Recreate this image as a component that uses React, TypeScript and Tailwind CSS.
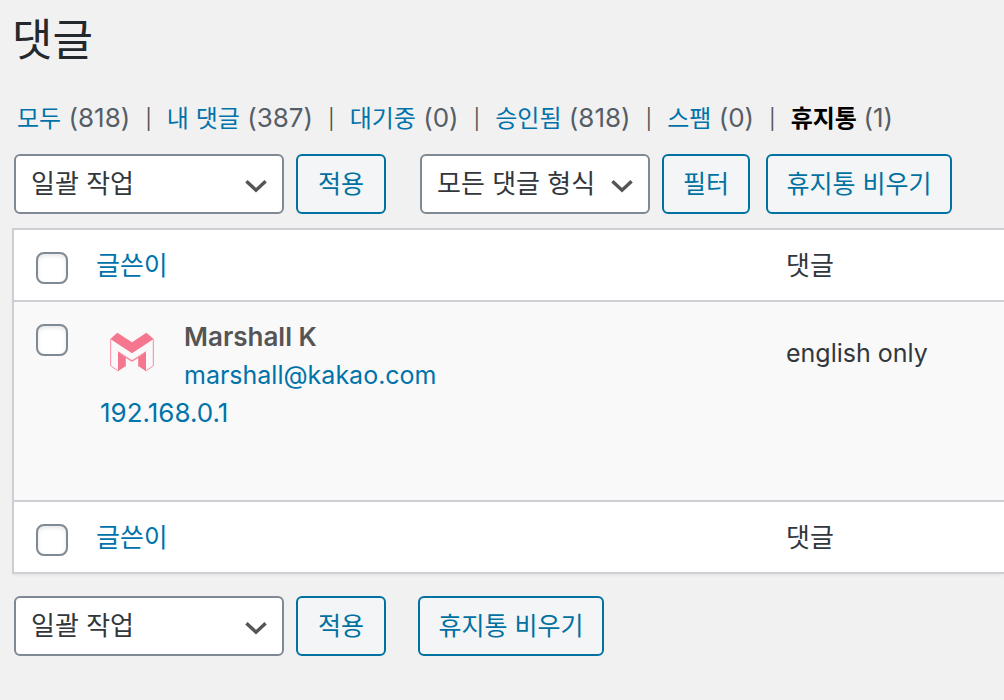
import React from "react";

const filters = [
  { label: "모두", count: 818 },
  { label: "내 댓글", count: 387 },
  { label: "대기중", count: 0 },
  { label: "승인됨", count: 818 },
  { label: "스팸", count: 0 },
  { label: "휴지통", count: 1, current: true },
];

function Select({ label, option, className }: { label: string; option: string; className: string }) {
  return (
    <div className={`relative h-[60px] shrink-0 ${className}`}>
      <select
        aria-label={label}
        className="block h-full w-full appearance-none rounded-md border-2 border-[#7e8993] bg-white pl-[15px] pr-12 text-[26px] leading-8 text-[#32373c]"
      >
        <option>{option}</option>
      </select>
      <svg
        className="pointer-events-none absolute right-4 top-[25px] h-3.5 w-6"
        viewBox="0 0 24 14"
        fill="none"
        stroke="#555"
        strokeWidth="3.4"
        aria-hidden="true"
      >
        <path d="M2.4 2.2 12 11.2 21.6 2.2" />
      </svg>
    </div>
  );
}

function Button({ children, className }: { children: React.ReactNode; className: string }) {
  return (
    <button
      type="button"
      className={`h-[60px] shrink-0 whitespace-nowrap rounded-md border-2 border-[#0071a1] bg-[#f3f5f6] pt-0.5 text-center text-[25px] text-[#0071a1] ${className}`}
    >
      {children}
    </button>
  );
}

function Checkbox({ label }: { label: string }) {
  return (
    <input
      type="checkbox"
      aria-label={label}
      className="block h-8 w-8 appearance-none rounded-lg border-2 border-[#7e8993] bg-white shadow-[inset_0_2px_4px_rgba(0,0,0,0.1)] checked:bg-[#0071a1]"
    />
  );
}

function HeadingCells() {
  return (
    <>
      <td className="pl-[22px] pt-1.5">
        <Checkbox label="모두 선택" />
      </td>
      <th scope="col" className="pl-[7px] text-left font-normal">
        <a href="#author" className="text-[#0073aa]">글쓴이</a>
      </th>
      <th scope="col" className="text-left font-normal text-[#32373c]">댓글</th>
    </>
  );
}

function Logo() {
  return (
    <svg className="h-10 w-11" viewBox="0 0 132 120" role="img" aria-label="Marshall K">
      <path
        d="M2 22 V101 L24 117 M130 22 V101 L108 117 M24 59 L66 86 L108 59 M46 76 L66 88 L86 76 M46 104 V76 M86 104 V76"
        fill="none"
        stroke="#f5768f"
        strokeWidth="2.5"
      />
      <path
        d="M22 2 66 31 109 2 131 21 66 64 1 21Z M24 59 46 75V103L24 118Z M108 59 86 75V103L108 118Z"
        fill="#f5768f"
      />
    </svg>
  );
}

export default function App() {
  return (
    <main className="min-h-screen overflow-x-hidden bg-[#f1f1f1] pb-11 pl-3 font-['Inter','Noto_Sans_CJK_KR',sans-serif] text-[26px] text-[#444]">
      <h1 className="h-[78px] pt-2.5 text-[44px] leading-[60px] text-[#23282d]">댓글</h1>

      <ul className="flex h-[76px] items-center whitespace-nowrap pl-[5px] pt-1 text-[26px] leading-9">
        {filters.map((f, i) => (
          <li key={f.label} className="flex items-center">
            <a
              href="#filter"
              className={f.current ? "font-semibold text-black" : "text-[#0073aa]"}
            >
              <span className="text-2xl">{f.label}</span>{" "}
              <span className="font-normal text-[#555d66]">({f.count})</span>
            </a>
            {i < filters.length - 1 && <span className="px-[15px] pt-0.5 text-xl text-[#555]">|</span>}
          </li>
        ))}
      </ul>

      <div className="flex pl-0.5">
        <Select label="일괄 작업 선택" option="일괄 작업" className="w-[270px]" />
        <Button className="ml-3 w-[90px]">적용</Button>
        <Select label="댓글 형식 필터" option="모든 댓글 형식" className="ml-[34px] w-[230px]" />
        <Button className="ml-3 w-[88px]">필터</Button>
        <Button className="ml-4 w-[186px]">휴지통 비우기</Button>
      </div>

      <table className="mt-3.5 w-full table-fixed border-collapse border-y-2 border-l-2 border-[#ccd0d4] bg-white shadow-[0_2px_2px_rgba(0,0,0,0.04)]">
        <colgroup>
          <col className="w-[76px]" />
          <col />
          <col className="w-[218px]" />
        </colgroup>
        <thead>
          <tr className="h-[72px] border-b-2 border-[#ccd0d4]">
            <HeadingCells />
          </tr>
        </thead>
        <tbody>
          <tr className="h-[200px] bg-[#f9f9f9] align-top">
            <td className="pl-[22px] pt-[22px]">
              <Checkbox label="댓글 선택" />
            </td>
            <td className="pl-[11px] pt-4 text-[25px] leading-[38px]">
              <div className="flex">
                <div className="w-[84px] shrink-0 pl-2.5 pt-3.5">
                  <Logo />
                </div>
                <div>
                  <strong className="block text-[26px] font-semibold text-[#555]">Marshall K</strong>
                  <a href="mailto:marshall@kakao.com" className="block text-[#0073aa]">
                    marshall@kakao.com
                  </a>
                </div>
              </div>
              <a href="#ip" className="block text-[26px] text-[#0073aa]">192.168.0.1</a>
            </td>
            <td className="pt-8 text-[25px] leading-[38px] text-[#32373c]">english only</td>
          </tr>
        </tbody>
        <tfoot>
          <tr className="h-[72px] border-t-2 border-[#ccd0d4]">
            <HeadingCells />
          </tr>
        </tfoot>
      </table>

      <div className="mt-[22px] flex pl-0.5">
        <Select label="하단 일괄 작업 선택" option="일괄 작업" className="w-[270px]" />
        <Button className="ml-3 w-[90px]">적용</Button>
        <Button className="ml-8 w-[186px]">휴지통 비우기</Button>
      </div>
    </main>
  );
}
